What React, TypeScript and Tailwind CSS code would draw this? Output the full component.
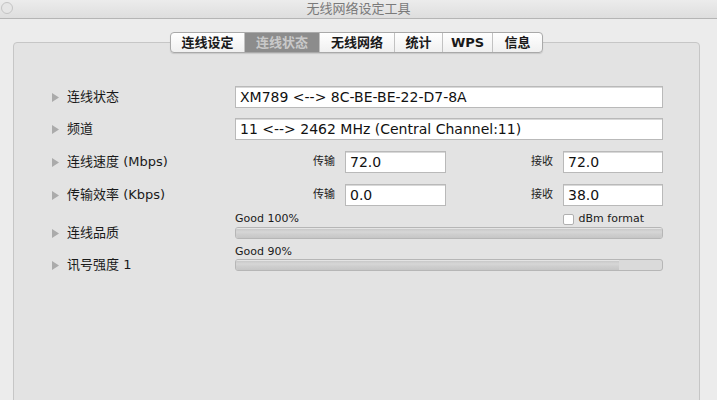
import React from "react";

const FONT = { fontFamily: '"DejaVu Sans", "Noto Sans CJK SC", sans-serif' };

function Tri() {
  return (
    <svg width="7" height="9" viewBox="0 0 7 9" className="shrink-0">
      <path d="M0 0 L7 4.5 L0 9 Z" fill="#ababab" />
    </svg>
  );
}

function Label({ text, h }: { text: string; h?: string }) {
  return (
    <div className={`flex w-[221px] shrink-0 items-center gap-[8px] pl-[38px] text-[13px] text-[#1a1a1a] ${h ?? ""}`}>
      <Tri />
      <span>{text}</span>
    </div>
  );
}

function Field({ value, w }: { value: string; w: string }) {
  return (
    <div
      className={`${w} h-[22px] shrink-0 border border-[#b9b9b9] bg-white pl-[4px] text-[14px] leading-[20px] text-[#111] shadow-[inset_0_1px_0_#d8d8d8]`}
    >
      {value}
    </div>
  );
}

function Bar({ pct }: { pct: number }) {
  return (
    <div className="relative h-[12px] w-[428px] overflow-hidden rounded-[3px] border border-[#b6b6b6] bg-[#dadada]">
      <div
        className="h-full bg-[linear-gradient(#c4c4c4,#d6d6d6_40%,#cfcfcf_60%,#c6c6c6)] shadow-[inset_0_1px_0_#e4e4e4]"
        style={{ width: `${pct}%` }}
      />
    </div>
  );
}

const tabs = ["连线设定", "连线状态", "无线网络", "统计", "WPS", "信息"];
const tabW = ["w-[73px]", "w-[75px]", "w-[75px]", "w-[48px]", "w-[50px]", "w-[50px]"];

export default function App() {
  return (
    <div className="h-[400px] w-[717px] overflow-hidden bg-[#ececec]" style={FONT}>
      {/* Title bar */}
      <div className="relative flex h-[19px] items-center justify-center border-b border-[#b5b5b5] bg-[linear-gradient(#ececec,#dedede)] text-[13px] text-[#7a7a7a]">
        <div className="absolute left-[1px] top-[2px] h-[12px] w-[12px] rounded-full border border-[#c4c4c4] bg-[#e6e6e6]" />
        <span>无线网络设定工具</span>
      </div>

      <div className="flex flex-col pl-[13px] pr-[17px] pt-[13px]">
        {/* Tabs */}
        <div className="relative z-10 flex justify-center">
          <div className="flex h-[21px] overflow-hidden rounded-[4px] border border-[#a9a9a9] bg-[linear-gradient(#ffffff,#f0f0f0)] shadow-[0_1px_1px_rgba(0,0,0,0.12)]">
            {tabs.map((t, i) => (
              <div
                key={t}
                className={`${tabW[i]} flex items-center justify-center text-[13px] font-bold ${
                  i === 1 ? "bg-[#8c8c8c] text-[#c9c9c9]" : "text-[#1a1a1a]"
                } ${i > 0 ? "border-l border-[#c2c2c2]" : ""}`}
              >
                {t}
              </div>
            ))}
          </div>
        </div>

        {/* Group box */}
        <div className="-mt-[11px] h-[400px] rounded-[4px] border border-[#c6c6c6] bg-[#e3e3e3] pt-[43px]">
          {/* row 1 */}
          <div className="flex items-center">
            <Label text="连线状态" />
            <Field value="XM789 <--> 8C-BE-BE-22-D7-8A" w="w-[428px]" />
          </div>
          {/* row 2 */}
          <div className="mt-[10px] flex items-center">
            <Label text="频道" />
            <Field value="11 <--> 2462 MHz (Central Channel:11)" w="w-[428px]" />
          </div>
          {/* row 3 */}
          <div className="mt-[11px] flex items-center">
            <Label text="连线速度 (Mbps)" />
            <div className="flex w-[211px] items-center justify-end gap-[10px]">
              <span className="text-[11px] text-[#222]">传输</span>
              <Field value="72.0" w="w-[101px]" />
            </div>
            <div className="flex w-[217px] items-center justify-end gap-[10px]">
              <span className="text-[11px] text-[#222]">接收</span>
              <Field value="72.0" w="w-[100px]" />
            </div>
          </div>
          {/* row 4 */}
          <div className="mt-[11px] flex items-center">
            <Label text="传输效率 (Kbps)" />
            <div className="flex w-[211px] items-center justify-end gap-[10px]">
              <span className="text-[11px] text-[#222]">传输</span>
              <Field value="0.0" w="w-[101px]" />
            </div>
            <div className="flex w-[217px] items-center justify-end gap-[10px]">
              <span className="text-[11px] text-[#222]">接收</span>
              <Field value="38.0" w="w-[100px]" />
            </div>
          </div>
          {/* row 5 */}
          <div className="mt-[6px] flex items-end">
            <Label text="连线品质" h="h-[12px]" />
            <div className="flex flex-col">
              <div className="flex h-[14px] items-center justify-between text-[11px] text-[#1a1a1a]">
                <span>Good 100%</span>
                <span className="flex items-center gap-[5px] pr-[19px]">
                  <span className="h-[11px] w-[11px] rounded-[2px] border border-[#b0b0b0] bg-white" />
                  dBm format
                </span>
              </div>
              <div className="mt-[1px]">
                <Bar pct={100} />
              </div>
            </div>
          </div>
          {/* row 6 */}
          <div className="mt-[6px] flex items-end">
            <Label text="讯号强度 1" h="h-[12px]" />
            <div className="flex flex-col">
              <div className="flex h-[14px] items-center text-[11px] text-[#1a1a1a]">
                <span>Good 90%</span>
              </div>
              <div>
                <Bar pct={90} />
              </div>
            </div>
          </div>
        </div>
      </div>
    </div>
  );
}
